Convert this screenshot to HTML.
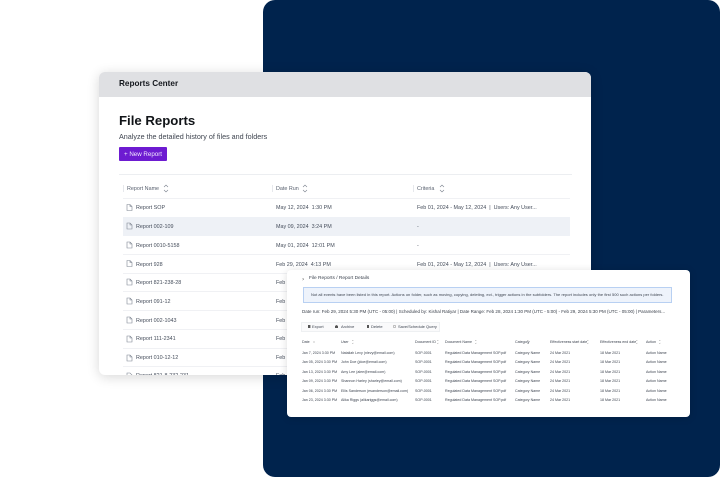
<!DOCTYPE html>
<html><head><meta charset="utf-8"><style>
*{box-sizing:border-box}
html,body{margin:0;padding:0;background:#fff}
body{width:720px;height:477px;position:relative;overflow:hidden;font-family:"Liberation Sans",sans-serif}
.a{position:absolute;white-space:nowrap}
#navy{left:263px;top:0;width:457px;height:477px;background:#00234d;border-radius:12px}
#card{left:99px;top:72px;width:492px;height:303px;background:#fff;border-radius:6px;box-shadow:0 2px 12px rgba(0,0,0,.16);overflow:hidden}
#bar{left:0;top:0;width:492px;height:25px;background:#dfe0e3}
.t{font-size:5.4px;color:#454d5b;line-height:8px;height:8px}
.l{height:1px;background:#f0f1f4}
svg{position:absolute;overflow:visible}
#det{left:287px;top:270px;width:403px;height:147px;background:#fff;border-radius:4px;box-shadow:0 1px 8px rgba(0,0,0,.14)}
.s{font-size:3.6px;line-height:5px;height:5px;color:#3d4450}
.b{font-size:4px;line-height:5px;color:#3d4450}
</style></head><body>
<div class="a" id="navy"></div>
<div class="a" id="card">
<div class="a" id="bar"></div>
<div class="a" style="left:20px;top:6px;font-size:8.2px;line-height:12px;font-weight:bold;color:#15181e">Reports Center</div>
<div class="a" style="left:20px;top:39px;font-size:13.2px;line-height:20px;font-weight:bold;color:#111418">File Reports</div>
<div class="a" style="left:20px;top:59px;font-size:7.2px;line-height:11px;color:#3f4550">Analyze the detailed history of files and folders</div>
<div class="a" style="left:20px;top:75px;width:48px;height:14px;background:#6d1bd1;border-radius:1px;color:#f3eaff;font-size:6.2px;line-height:15px;text-align:center">+ New Report</div>
<div class="a l" style="left:20px;top:102px;width:453px;height:1px;background:#eceef1"></div>

<div class="a" style="left:24px;top:113px;width:1px;height:7px;background:#e6e8ec"></div>
<div class="a" style="left:173px;top:113px;width:1px;height:7px;background:#e6e8ec"></div>
<div class="a" style="left:314px;top:113px;width:1px;height:7px;background:#e6e8ec"></div>
<div class="a t" style="left:28px;top:113px;color:#5a6270">Report Name</div>
<div class="a t" style="left:177px;top:113px;color:#5a6270">Date Run</div>
<div class="a t" style="left:318px;top:113px;color:#5a6270">Criteria</div>
<svg style="left:0;top:0" width="492" height="303"><g fill="none" stroke="#7a818d" stroke-width=".6"><path d="M65 115l2-2 2 2M65 118l2 2 2-2M204 115l2-2 2 2M204 118l2 2 2-2M341 115l2-2 2 2M341 118l2 2 2-2"/></g></svg>

<div class="a l" style="left:24px;top:126px;width:447px"></div>
<div class="a" style="left:24px;top:145px;width:447px;height:19px;background:#eef1f6"></div>
<div class="a l" style="left:24px;top:182px;width:447px"></div>
<div class="a l" style="left:24px;top:201px;width:447px"></div>
<div class="a l" style="left:24px;top:219px;width:447px"></div>
<div class="a l" style="left:24px;top:238px;width:447px"></div>
<div class="a l" style="left:24px;top:257px;width:447px"></div>
<div class="a l" style="left:24px;top:276px;width:447px"></div>
<div class="a l" style="left:24px;top:294px;width:447px"></div>

<svg style="left:0;top:0" width="492" height="303"><g fill="none" stroke="#7f8692" stroke-width=".6">
<path d="M28 132.500h3l2 2v4h-5zM31 132.500v2h2"/>
<path d="M28 151h3l2 2v4h-5zM31 151v2h2"/>
<path d="M28 170h3l2 2v4h-5zM31 170v2h2"/>
<path d="M28 188.500h3l2 2v4h-5zM31 188.500v2h2"/>
<path d="M28 207h3l2 2v4h-5zM31 207v2h2"/>
<path d="M28 226h3l2 2v4h-5zM31 226v2h2"/>
<path d="M28 245h3l2 2v4h-5zM31 245v2h2"/>
<path d="M28 264h3l2 2v4h-5zM31 264v2h2"/>
<path d="M28 283h3l2 2v4h-5zM31 283v2h2"/>
<path d="M28 301h3l2 2v4h-5z"/>
</g></svg>

<div class="a t" style="left:37px;top:132px">Report SOP</div>
<div class="a t" style="left:37px;top:151px">Report 002-109</div>
<div class="a t" style="left:37px;top:170px">Report 0010-5158</div>
<div class="a t" style="left:37px;top:189px">Report 928</div>
<div class="a t" style="left:37px;top:207px">Report 821-238-28</div>
<div class="a t" style="left:37px;top:226px">Report 091-12</div>
<div class="a t" style="left:37px;top:245px">Report 002-1043</div>
<div class="a t" style="left:37px;top:263px">Report 111-2341</div>
<div class="a t" style="left:37px;top:282px">Report 010-12-12</div>
<div class="a t" style="left:37px;top:300px">Report 821-8-232-231</div>

<div class="a t" style="left:177px;top:132px">May 12, 2024 &nbsp;1:30 PM</div>
<div class="a t" style="left:177px;top:151px">May 09, 2024 &nbsp;3:24 PM</div>
<div class="a t" style="left:177px;top:170px">May 01, 2024 &nbsp;12:01 PM</div>
<div class="a t" style="left:177px;top:189px">Feb 29, 2024 &nbsp;4:13 PM</div>
<div class="a t" style="left:177px;top:207px">Feb 21, 2024</div>
<div class="a t" style="left:177px;top:226px">Feb 20, 2024</div>
<div class="a t" style="left:177px;top:245px">Feb 19, 2024</div>
<div class="a t" style="left:177px;top:263px">Feb 14, 2024</div>
<div class="a t" style="left:177px;top:282px">Feb 12, 2024</div>
<div class="a t" style="left:177px;top:300px">Feb 02, 2024</div>

<div class="a t" style="left:318px;top:132px">Feb 01, 2024 - May 12, 2024 &nbsp;|&nbsp; Users: Any User...</div>
<div class="a t" style="left:318px;top:151px">-</div>
<div class="a t" style="left:318px;top:170px">-</div>
<div class="a t" style="left:318px;top:189px">Feb 01, 2024 - May 12, 2024 &nbsp;|&nbsp; Users: Any User...</div>
</div>

<div class="a" id="det">
<svg style="left:0;top:0" width="403" height="147"><path d="M15.500 8.200l1.400 1-1.400 1" fill="none" stroke="#555" stroke-width=".5"/></svg>
<div class="a" style="left:22px;top:6px;font-size:4.800px;line-height:6px;color:#3d4450">File Reports / Report Details</div>
<div class="a" style="left:16px;top:17px;width:369px;height:16px;background:#eef3fb;border:1px solid #b8d0f2"></div>
<div class="a b" style="left:24px;top:22px;font-size:4px;word-spacing:.1px">Not all events have been listed in this report. Actions on folder, such as moving, copying, deleting, ect., trigger actions  in the subfolders.  The report includes only the first 500 such actions per folders.</div>
<div class="a" style="left:15px;top:37.500px;font-size:4.500px;line-height:7px;color:#3a404b">Date run: Feb 29, 2024 5:30 PM (UTC - 05:00) | Scheduled by: Kishal Ratiyar | Date Range: Feb 28, 2024 1:30 PM (UTC - 5:00) - Feb 29, 2024 5:30 PM (UTC - 05:00) | Parameters...</div>
<div class="a" style="left:14px;top:52px;width:139px;height:10px;background:#fafafb;border:1px solid #eef0f2"></div>
<div class="a b" style="left:25px;top:54px">Export</div>
<div class="a b" style="left:54px;top:54px">Archive</div>
<div class="a b" style="left:84px;top:54px">Delete</div>
<div class="a b" style="left:111px;top:54px">Save/Schedule Query</div>
<svg style="left:0;top:0" width="403" height="147"><g fill="#555"><rect x="21" y="55" width="2.400" height="3"/><path d="M48 58v-2l1.500-1 1.500 1v2z"/><rect x="80" y="55" width="2" height="3"/></g><circle cx="107.500" cy="56.500" r="1.300" fill="none" stroke="#666" stroke-width=".4"/></svg>

<div class="a s" style="left:15px;top:69.500px">Date</div>
<div class="a s" style="left:54px;top:69.500px">User</div>
<div class="a s" style="left:128px;top:70px">Document ID</div>
<div class="a s" style="left:158px;top:69.500px">Document Name</div>
<div class="a s" style="left:228px;top:69.500px">Category</div>
<div class="a s" style="left:263px;top:69.500px">Effectiveness start date</div>
<div class="a s" style="left:313px;top:69.500px">Effectiveness end date</div>
<div class="a s" style="left:359px;top:69.500px">Action</div>
<svg style="left:0;top:0" width="403" height="147"><g fill="none" stroke="#777" stroke-width=".4"><path d="M26 72h2M65 71l.7-.7.7.7M65 73l.7.7.7-.7M150 71l.7-.7.7.7M150 73l.7.7.7-.7M188 71l.7-.7.7.7M188 73l.7.7.7-.7M240 71l.7-.7.7.7M240 73l.7.7.7-.7M300 71l.7-.7.7.7M300 73l.7.7.7-.7M349 71l.7-.7.7.7M349 73l.7.7.7-.7M372 71l.7-.7.7.7M372 73l.7.7.7-.7"/></g></svg>

<div class="a s" style="left:15px;top:80.500px">Jan 7, 2024 3:30 PM</div><div class="a s" style="left:54px;top:80.500px">Nataliah Levy (nlevy@email.com)</div>
<div class="a s" style="left:15px;top:89.500px">Jan 05, 2024 3:30 PM</div><div class="a s" style="left:54px;top:89.500px">John Doe (jdoe@email.com)</div>
<div class="a s" style="left:15px;top:99.500px">Jan 13, 2024 3:30 PM</div><div class="a s" style="left:54px;top:99.500px">Amy Lee (alee@email.com)</div>
<div class="a s" style="left:15px;top:108.500px">Jan 09, 2024 3:30 PM</div><div class="a s" style="left:54px;top:108.500px">Shannon Harley (sharley@email.com)</div>
<div class="a s" style="left:15px;top:118.500px">Jan 06, 2024 3:30 PM</div><div class="a s" style="left:54px;top:118.500px">Ellis Sanderson (esanderson@email.com)</div>
<div class="a s" style="left:15px;top:127.500px">Jan 23, 2024 3:30 PM</div><div class="a s" style="left:54px;top:127.500px">Alika Riggs (alikariggs@email.com)</div>

<div class="a s" style="left:128px;top:80.500px">SOP-0001</div><div class="a s" style="left:158px;top:80.500px">Regulated Data Management SOP.pdf</div><div class="a s" style="left:228px;top:80.500px">Category Name</div><div class="a s" style="left:263px;top:80.500px">24 Mar 2021</div><div class="a s" style="left:313px;top:80.500px">18 Mar 2021</div><div class="a s" style="left:359px;top:80.500px">Action Name</div>
<div class="a s" style="left:128px;top:89.500px">SOP-0001</div><div class="a s" style="left:158px;top:89.500px">Regulated Data Management SOP.pdf</div><div class="a s" style="left:228px;top:89.500px">Category Name</div><div class="a s" style="left:263px;top:89.500px">24 Mar 2021</div><div class="a s" style="left:313px;top:89.500px">18 Mar 2021</div><div class="a s" style="left:359px;top:89.500px">Action Name</div>
<div class="a s" style="left:128px;top:99.500px">SOP-0001</div><div class="a s" style="left:158px;top:99.500px">Regulated Data Management SOP.pdf</div><div class="a s" style="left:228px;top:99.500px">Category Name</div><div class="a s" style="left:263px;top:99.500px">24 Mar 2021</div><div class="a s" style="left:313px;top:99.500px">18 Mar 2021</div><div class="a s" style="left:359px;top:99.500px">Action Name</div>
<div class="a s" style="left:128px;top:108.500px">SOP-0001</div><div class="a s" style="left:158px;top:108.500px">Regulated Data Management SOP.pdf</div><div class="a s" style="left:228px;top:108.500px">Category Name</div><div class="a s" style="left:263px;top:108.500px">24 Mar 2021</div><div class="a s" style="left:313px;top:108.500px">18 Mar 2021</div><div class="a s" style="left:359px;top:108.500px">Action Name</div>
<div class="a s" style="left:128px;top:118.500px">SOP-0001</div><div class="a s" style="left:158px;top:118.500px">Regulated Data Management SOP.pdf</div><div class="a s" style="left:228px;top:118.500px">Category Name</div><div class="a s" style="left:263px;top:118.500px">24 Mar 2021</div><div class="a s" style="left:313px;top:118.500px">18 Mar 2021</div><div class="a s" style="left:359px;top:118.500px">Action Name</div>
<div class="a s" style="left:128px;top:127.500px">SOP-0001</div><div class="a s" style="left:158px;top:127.500px">Regulated Data Management SOP.pdf</div><div class="a s" style="left:228px;top:127.500px">Category Name</div><div class="a s" style="left:263px;top:127.500px">24 Mar 2021</div><div class="a s" style="left:313px;top:127.500px">18 Mar 2021</div><div class="a s" style="left:359px;top:127.500px">Action Name</div>
</div>
</body></html>
